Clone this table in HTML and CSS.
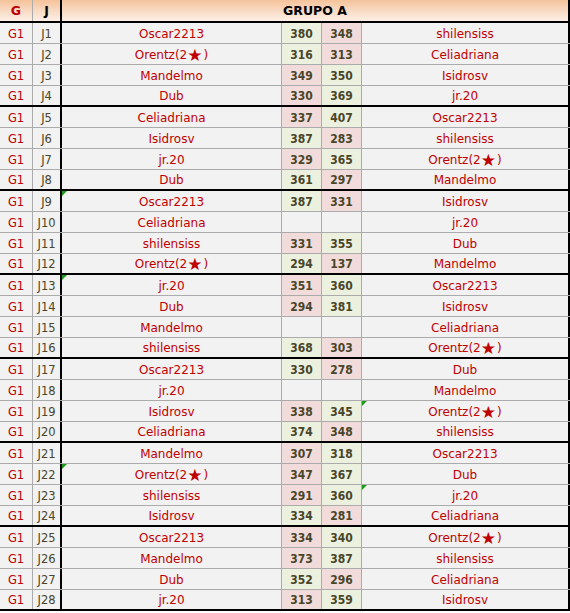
FILE: index.html
```html
<!DOCTYPE html>
<html>
<head>
<meta charset="utf-8">
<link rel="stylesheet" href="styles.css">
</head>
<body>
<div class="sheet">
  <div class="row head">
    <div class="c g">G</div>
    <div class="c j">J</div>
    <div class="c title">GRUPO A</div>
  </div>

  <div class="row"><div class="c g">G1</div><div class="c j">J1</div><div class="c n">Oscar2213</div><div class="c s w">380</div><div class="c s l">348</div><div class="c n r">shilensiss</div></div>
  <div class="row"><div class="c g">G1</div><div class="c j">J2</div><div class="c n">Orentz(2<span class="star">★</span>)</div><div class="c s w">316</div><div class="c s l">313</div><div class="c n r">Celiadriana</div></div>
  <div class="row"><div class="c g">G1</div><div class="c j">J3</div><div class="c n">Mandelmo</div><div class="c s l">349</div><div class="c s w">350</div><div class="c n r">Isidrosv</div></div>
  <div class="row end"><div class="c g">G1</div><div class="c j">J4</div><div class="c n">Dub</div><div class="c s l">330</div><div class="c s w">369</div><div class="c n r">jr.20</div></div>

  <div class="row"><div class="c g">G1</div><div class="c j">J5</div><div class="c n">Celiadriana</div><div class="c s l">337</div><div class="c s w">407</div><div class="c n r">Oscar2213</div></div>
  <div class="row"><div class="c g">G1</div><div class="c j">J6</div><div class="c n">Isidrosv</div><div class="c s w">387</div><div class="c s l">283</div><div class="c n r">shilensiss</div></div>
  <div class="row"><div class="c g">G1</div><div class="c j">J7</div><div class="c n">jr.20</div><div class="c s l">329</div><div class="c s w">365</div><div class="c n r">Orentz(2<span class="star">★</span>)</div></div>
  <div class="row end"><div class="c g">G1</div><div class="c j">J8</div><div class="c n">Dub</div><div class="c s w">361</div><div class="c s l">297</div><div class="c n r">Mandelmo</div></div>

  <div class="row"><div class="c g">G1</div><div class="c j">J9</div><div class="c n mark">Oscar2213</div><div class="c s w">387</div><div class="c s l">331</div><div class="c n r">Isidrosv</div></div>
  <div class="row"><div class="c g">G1</div><div class="c j">J10</div><div class="c n">Celiadriana</div><div class="c s"></div><div class="c s"></div><div class="c n r">jr.20</div></div>
  <div class="row"><div class="c g">G1</div><div class="c j">J11</div><div class="c n">shilensiss</div><div class="c s l">331</div><div class="c s w">355</div><div class="c n r">Dub</div></div>
  <div class="row end"><div class="c g">G1</div><div class="c j">J12</div><div class="c n">Orentz(2<span class="star">★</span>)</div><div class="c s w">294</div><div class="c s l">137</div><div class="c n r">Mandelmo</div></div>

  <div class="row"><div class="c g">G1</div><div class="c j">J13</div><div class="c n mark">jr.20</div><div class="c s l">351</div><div class="c s w">360</div><div class="c n r">Oscar2213</div></div>
  <div class="row"><div class="c g">G1</div><div class="c j">J14</div><div class="c n">Dub</div><div class="c s l">294</div><div class="c s w">381</div><div class="c n r">Isidrosv</div></div>
  <div class="row"><div class="c g">G1</div><div class="c j">J15</div><div class="c n">Mandelmo</div><div class="c s"></div><div class="c s"></div><div class="c n r">Celiadriana</div></div>
  <div class="row end"><div class="c g">G1</div><div class="c j">J16</div><div class="c n">shilensiss</div><div class="c s w">368</div><div class="c s l">303</div><div class="c n r">Orentz(2<span class="star">★</span>)</div></div>

  <div class="row"><div class="c g">G1</div><div class="c j">J17</div><div class="c n">Oscar2213</div><div class="c s w">330</div><div class="c s l">278</div><div class="c n r">Dub</div></div>
  <div class="row"><div class="c g">G1</div><div class="c j">J18</div><div class="c n">jr.20</div><div class="c s"></div><div class="c s"></div><div class="c n r">Mandelmo</div></div>
  <div class="row"><div class="c g">G1</div><div class="c j">J19</div><div class="c n">Isidrosv</div><div class="c s l">338</div><div class="c s w">345</div><div class="c n r mark">Orentz(2<span class="star">★</span>)</div></div>
  <div class="row end"><div class="c g">G1</div><div class="c j">J20</div><div class="c n">Celiadriana</div><div class="c s w">374</div><div class="c s l">348</div><div class="c n r">shilensiss</div></div>

  <div class="row"><div class="c g">G1</div><div class="c j">J21</div><div class="c n">Mandelmo</div><div class="c s l">307</div><div class="c s w">318</div><div class="c n r">Oscar2213</div></div>
  <div class="row"><div class="c g">G1</div><div class="c j">J22</div><div class="c n mark">Orentz(2<span class="star">★</span>)</div><div class="c s l">347</div><div class="c s w">367</div><div class="c n r">Dub</div></div>
  <div class="row"><div class="c g">G1</div><div class="c j">J23</div><div class="c n">shilensiss</div><div class="c s l">291</div><div class="c s w">360</div><div class="c n r mark">jr.20</div></div>
  <div class="row end"><div class="c g">G1</div><div class="c j">J24</div><div class="c n">Isidrosv</div><div class="c s w">334</div><div class="c s l">281</div><div class="c n r">Celiadriana</div></div>

  <div class="row"><div class="c g">G1</div><div class="c j">J25</div><div class="c n">Oscar2213</div><div class="c s l">334</div><div class="c s w">340</div><div class="c n r">Orentz(2<span class="star">★</span>)</div></div>
  <div class="row"><div class="c g">G1</div><div class="c j">J26</div><div class="c n">Mandelmo</div><div class="c s l">373</div><div class="c s w">387</div><div class="c n r">shilensiss</div></div>
  <div class="row"><div class="c g">G1</div><div class="c j">J27</div><div class="c n">Dub</div><div class="c s w">352</div><div class="c s l">296</div><div class="c n r">Celiadriana</div></div>
  <div class="row end"><div class="c g">G1</div><div class="c j">J28</div><div class="c n">jr.20</div><div class="c s l">313</div><div class="c s w">359</div><div class="c n r">Isidrosv</div></div>
</div>
</body>
</html>
```

FILE: styles.css
```css
html, body {
  margin: 0;
  padding: 0;
  background: #ffffff;
}

.sheet {
  width: 570px;
  display: flex;
  flex-direction: column;
  font-family: "DejaVu Sans", Verdana, sans-serif;
  font-size: 12px;
  background: #f2f2f2;
}

.row {
  display: grid;
  grid-template-columns: 33px 29px 220px 40px 40px 208px;
  height: 21px;
  box-sizing: border-box;
  border-bottom: 1px solid #ababab;
}

.row.end {
  border-bottom: 2px solid #000000;
}

.row.head {
  grid-template-columns: 33px 29px 508px;
  height: 23px;
  border-bottom: 2px solid #000000;
  background: linear-gradient(to bottom, #f5c39b 0%, #f9dcc6 55%, #fcefe6 100%);
}

.c {
  position: relative;
  display: flex;
  align-items: center;
  justify-content: center;
  box-sizing: border-box;
  border-right: 1px solid #ababab;
  white-space: nowrap;
  padding-top: 1px;
}

.c.g {
  color: #c00000;
  font-size: 11.5px;
}

.c.j {
  color: #494529;
  font-size: 11.5px;
  border-right: 2px solid #000000;
}

.head .c {
  font-weight: bold;
  font-size: 12.5px;
  padding-top: 0;
}

.head .c.g {
  color: #c00000;
}

.head .c.j {
  color: #000000;
}

.head .c.title {
  color: #000000;
  border-right: 2px solid #000000;
  font-size: 12.5px;
}

.c.n {
  color: #c00000;
}

.c.n.r {
  border-right: 2px solid #000000;
}

.c.s {
  font-family: "DejaVu Sans Condensed", "DejaVu Sans", sans-serif;
  font-weight: bold;
  font-size: 12px;
  color: #494529;
}

.c.s.w {
  background: #ebf1de;
}

.c.s.l {
  background: #f2dcdb;
}

.star {
  font-size: 17px;
  line-height: 12px;
  margin: 0 1px 0 0;
  color: #c00000;
}

.mark::before {
  content: "";
  position: absolute;
  left: 0;
  top: 0;
  width: 0;
  height: 0;
  border-top: 5px solid #1e9a1e;
  border-right: 5px solid transparent;
}
```
